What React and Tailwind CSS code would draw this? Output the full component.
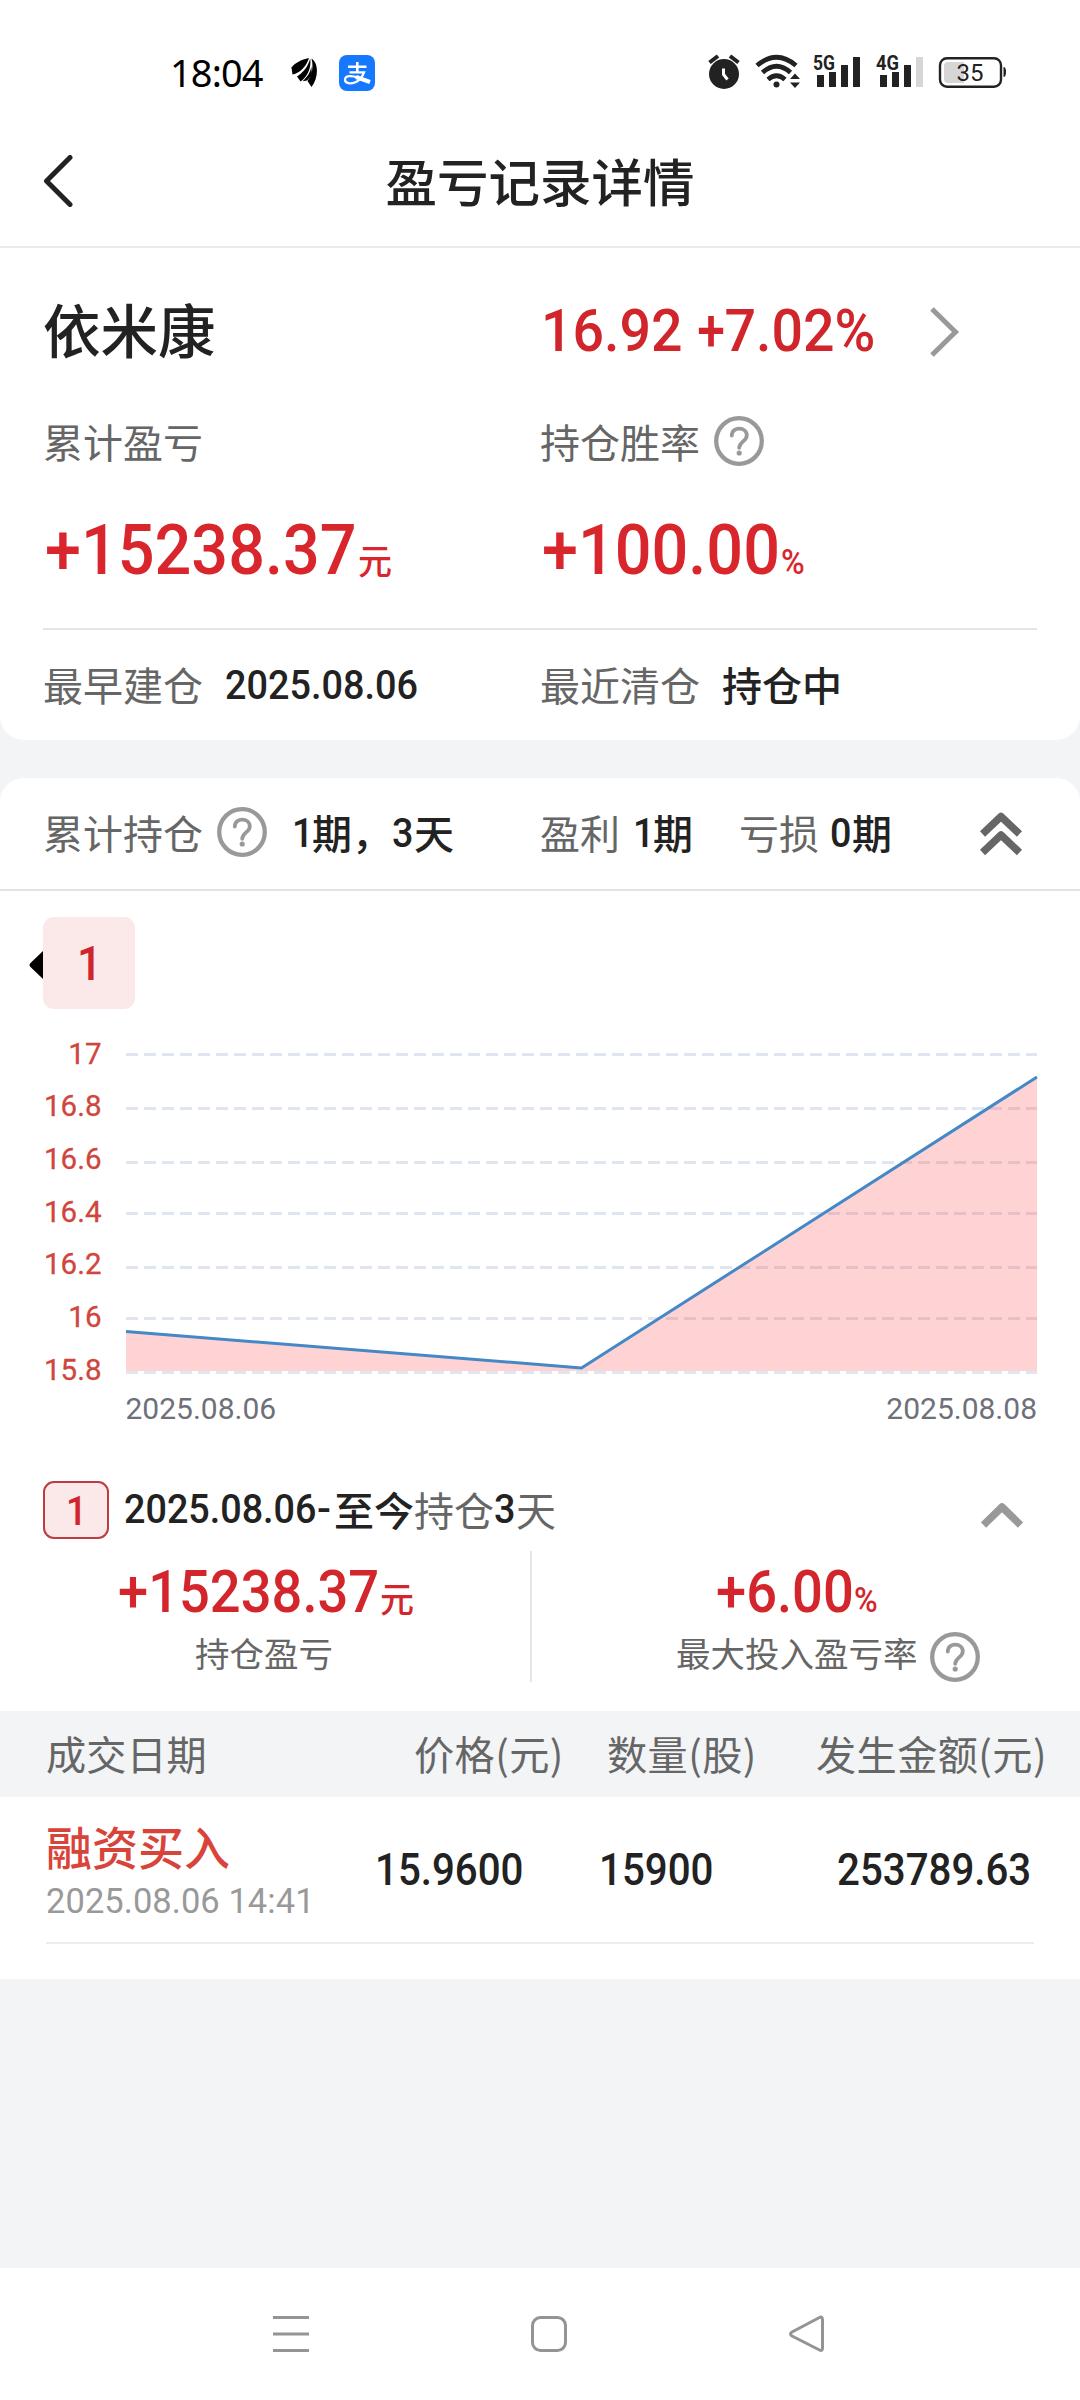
const gridLines = [
  { label: "17", y: 11 },
  { label: "16.8", y: 65 },
  { label: "16.6", y: 119 },
  { label: "16.4", y: 170 },
  { label: "16.2", y: 224 },
  { label: "16", y: 275 },
  { label: "15.8", y: 329 },
];

const Help = ({ className = "" }) => (
  <svg viewBox="0 0 50 50" className={`size-[50px] shrink-0 ${className}`} fill="none" stroke="#999">
    <circle cx="25" cy="25" r="22.800" strokeWidth="4.300" />
    <path d="M17.8 19.5c0-9.2 15-9 15 0 0 5.600-7.600 6.200-7.600 12.300" strokeWidth="3.800" strokeLinecap="round" />
    <circle cx="25.200" cy="37" r="2.600" fill="#999" stroke="none" />
  </svg>
);

// narrow figures, squeezed to the given box
const Num = ({ children, box, text }) => (
  <span className={`inline-block shrink-0 whitespace-nowrap font-[Roboto] font-medium ${box}`}>
    <span className={`inline-block origin-left ${text}`}>{children}</span>
  </span>
);

const StatusBar = () => (
  <div className="flex h-[120px] items-start pt-[53px] text-[#222]">
    <span className="-mt-px ml-[170px] w-[121px] font-['Noto_Sans'] text-[38px] leading-[40px] tracking-[-0.9px] text-black">18:04</span>
    <svg viewBox="0 0 27 30" className="mt-[5px] h-[30px] w-[27px]" fill="#000">
      <path d="M18 0C10 1.500 4 5 0.500 9.500L1.500 16.500C9 15 15 9 18 0z" />
      <path d="M19.200 0.500C17 9 12 14.500 6 18.500L9.500 23.500C17 18.500 20.500 9 19.200 0.500z" />
      <path d="M20.500 0.500C27.500 5 28 19 20.500 29L16.500 23C21.500 16.500 22.500 8 20.500 0.500z" />
      <path d="M11.500 23.200C17 18.500 20 13 20.300 8L21 17L16 22.500z" />
    </svg>
    <svg viewBox="0 0 36 36" className="mt-[2px] ml-[21px] size-9 overflow-visible" fill="none" stroke="#fff">
      <rect width="36" height="36" rx="8" fill="#1677ff" stroke="none" />
      <path d="M9 11.800h18.500M18.300 7v10.500" strokeWidth="2.600" />
      <path d="M10.500 17.300h14.500q-2.500 6.500-7.500 9.500c-5.500 3-11.500 1.500-11.500-2 0-4 6.500-4.800 12.500-2.300" strokeWidth="2.300" />
      <path d="M17 22l14 5" strokeWidth="4" />
    </svg>
    <svg viewBox="0 0 310 36" className="mt-[1px] ml-[332px] h-9 w-[310px] overflow-visible" fill="#222">
      <circle cx="17" cy="20" r="15" />
      <path d="M2.500 8.500l8.500-6.500M31.500 8.500l-8.500-6.500" stroke="#222" strokeWidth="4" />
      <path d="M16.500 14.500v6l4 5" stroke="#fff" strokeWidth="3" fill="none" />
      <g fill="none" stroke="#222" strokeWidth="4.800">
        <path d="M50 11.500q19.500-16.500 39 0" />
        <path d="M55.500 18.500q14-12.500 28 0" />
        <path d="M61 25.500q8.500-7.500 17 0" />
      </g>
      <circle cx="69.500" cy="30.500" r="3" />
      <path d="M88 19.500l5 5.500H83zM88 34l5-5.500H83z" />
      <text x="106" y="16" fontSize="21" fontWeight="700" fontFamily="Roboto" textLength="22" lengthAdjust="spacingAndGlyphs">5G</text>
      <path d="M110 21h7v12h-7zM122 18h7v15h-7zM134 11h7v22h-7zM146 3h7v30h-7z" />
      <text x="169" y="16" fontSize="21" fontWeight="700" fontFamily="Roboto" textLength="23" lengthAdjust="spacingAndGlyphs">4G</text>
      <path d="M173 21h7v12h-7zM185 18h7v15h-7zM197 11h7v22h-7z" />
      <path d="M209 3h7v30h-7z" fill="#d6d6d6" />
      <rect x="233" y="4.200" width="61" height="28.500" rx="7" fill="none" stroke="#222" strokeWidth="2.400" />
      <path d="M241 8h16v21h-16q-4 0-4-4V12q0-4 4-4z" fill="#d6d6d6" />
      <path d="M296.500 13q2.500 0 2.500 5t-2.500 5z" />
      <text x="249.500" y="27" fontSize="24" fontFamily="Roboto">35</text>
    </svg>
  </div>
);

const Chart = () => (
  <div className="mt-[34px] flex h-[399px]">
    <svg viewBox="0 0 1080 399" className="h-[399px] w-[1080px] overflow-visible" fontFamily="Roboto">
      {gridLines.map((line, i) => (
        <g key={line.label}>
          <text x="101.500" y={20.5 + i * 52.7} fontSize="29.500" fill="#d0453c" stroke="#d0453c" strokeWidth="0.300" textAnchor="end">
            {line.label}
          </text>
          <path d={`M126 ${line.y + 0.5}H1037`} stroke="#e0e6f1" strokeWidth="3" strokeDasharray="12 6" />
        </g>
      ))}
      <path d="M126 288.500L581.500 325 1037 34V328H126z" fill="rgba(255,35,35,0.2)" />
      <path d="M126 288.500L581.500 325 1037 34" fill="none" stroke="#4488c8" strokeWidth="3" strokeLinejoin="bevel" />
      <text x="125.500" y="376" fontSize="30" fill="#6e7079">2025.08.06</text>
      <text x="1037" y="376" fontSize="30" fill="#6e7079" textAnchor="end">2025.08.08</text>
    </svg>
  </div>
);

export default function App() {
  return (
    <div className="flex h-[2400px] w-[1080px] flex-col overflow-hidden bg-[#f2f4f6] font-['Noto_Sans_CJK_SC',sans-serif] text-[40px] leading-[40px] text-[#666]">
      <div className="h-[740px] rounded-b-[24px] bg-white">
        <StatusBar />
        <div className="grid h-[128px] grid-cols-[1fr_auto_1fr] items-center border-b-2 border-[#ebebeb] pb-[4px]">
          <svg viewBox="0 0 30 52" className="ml-[43px] h-[52px] w-[30px]" fill="none" stroke="#222" strokeWidth="5">
            <path d="M27 2.500L3.500 26l23.500 23.500" strokeLinecap="round" strokeLinejoin="round" />
          </svg>
          <h1 className="mb-[3px] text-[51.500px] leading-[60px] font-medium text-[#222]">盈亏记录详情</h1>
        </div>

        <div className="flex h-[167px] items-center">
          <h2 className="mb-[7px] w-[543px] pl-[43px] text-[57.500px] leading-[60px] font-medium text-[#222]">依米康</h2>
          <Num box="w-[387px] -mt-px text-[#d0252b]" text="scale-x-[0.940] text-[59px] leading-[60px] -ml-[2px]">
            16.92<span className="ml-[12px] inline-block origin-right scale-x-90">+</span>7.02%
          </Num>
          <svg viewBox="0 0 30 52" className="h-[52px] w-[30px]" fill="none" stroke="#999" strokeWidth="5">
            <path d="M2 3l23.500 23L2 49" />
          </svg>
        </div>

        <div className="mx-[43px] h-[215px] border-b-2 border-[#e4e5e6]">
          <div className="grid grid-cols-2 pt-[1px]">
            <div className="flex h-[50px] items-center">累计盈亏</div>
            <div className="flex h-[50px] items-center">
              持仓胜率
              <Help className="ml-[14px]" />
            </div>
          </div>
          <div className="mt-[50px] grid grid-cols-2 text-[#d8262c]">
            <div className="flex items-baseline">
              <Num box="w-[315px] pl-[2px]" text="scale-x-[0.925] text-[70px] leading-[68px]">+15238.37</Num>
              <span className="text-[34px] font-medium">元</span>
            </div>
            <div className="flex items-baseline">
              <Num box="w-[241px] pl-[2px]" text="scale-x-[0.925] text-[70px] leading-[68px]">+100.00</Num>
              <Num box="" text="scale-x-[0.920] text-[35px]">%</Num>
            </div>
          </div>
        </div>
        <div className="mx-[43px] grid h-[108px] grid-cols-2 items-center">
          <div className="flex items-center">
            <span className="w-[182px]">最早建仓</span>
            <Num box="text-[#222] pt-[2px]" text="scale-x-[0.922] text-[41px]">2025.08.06</Num>
          </div>
          <div className="flex items-center">
            <span className="w-[182px]">最近清仓</span>
            <span className="font-medium text-[#222]">持仓中</span>
          </div>
        </div>
      </div>

      <div className="mt-[38px] h-[1201px] rounded-t-[24px] bg-white">
        <div className="flex h-[113px] items-center border-b-2 border-[#e1e2e3] pb-[3px] pl-[43px]">
          <span>累计持仓</span>
          <Help className="mr-[25px] ml-[14px]" />
          <span className="flex w-[248px] items-center font-medium text-[#222]">
            <Num box="w-[20px] pt-[2px]" text="scale-x-[0.920] text-[41px]">1</Num>期，
            <Num box="w-[22px] pt-[2px]" text="scale-x-[0.920] text-[41px]">3</Num>天
          </span>
          <span className="w-[93px]">盈利</span>
          <span className="flex w-[106px] items-center font-medium text-[#222]">
            <Num box="w-[20px] pt-[2px]" text="scale-x-[0.920] text-[41px]">1</Num>期
          </span>
          <span className="w-[91px]">亏损</span>
          <span className="flex w-[150px] items-center font-medium text-[#222]">
            <Num box="w-[22px] pt-[2px]" text="scale-x-[0.920] text-[41px]">0</Num>期
          </span>
          <svg viewBox="0 0 42 44" className="mt-[4px] h-11 w-[42px]" fill="none" stroke="#666" strokeWidth="7.500">
            <path d="M2.500 22L21 4.500l18.500 17.500M2.500 40.500L21 23l18.500 17.500" strokeLinejoin="round" />
          </svg>
        </div>

        <div className="mt-[26px] flex items-center">
          <svg viewBox="0 0 14 28" className="ml-[29px] mt-1 h-7 w-3.5">
            <path d="M14 0v28L1.500 16q-2-2 0-4z" />
          </svg>
          <div className="flex h-[92px] w-[92px] items-center justify-center rounded-[11px] bg-[#fbe8e9]">
            <Num box="text-[#cf252b] pt-[4px] pl-[4px]" text="scale-x-[0.900] text-[49px]">1</Num>
          </div>
        </div>

        <Chart />

        <div className="mt-[38px] flex h-[60px] items-center pl-[43px]">
          <div className="flex h-[58px] w-[66px] items-center justify-center rounded-[11px] border-2 border-[#bd3b42] bg-[#fbe8e9]">
            <Num box="text-[#cf252b] pt-[3px] pl-[3px]" text="scale-x-[0.900] text-[41px]">1</Num>
          </div>
          <div className="mb-[3px] ml-[15px] flex w-[857px] items-center text-[#222]">
            <Num box="w-[193px] pt-[2px]" text="scale-x-[0.920] text-[41px]">2025.08.06</Num>
            <Num box="w-[17px] pt-[2px]" text="text-[41px]">-</Num>
            <span className="font-medium">至今</span>
            <span>
              <span className="text-[#666]">持仓</span>
            </span>
            <Num box="w-[22px] pt-[2px]" text="scale-x-[0.920] text-[41px]">3</Num>
            <span className="text-[#666]">天</span>
          </div>
          <svg viewBox="0 0 42 26" className="mt-[9px] h-[26px] w-[42px]" fill="none" stroke="#999" strokeWidth="7.500">
            <path d="M2.500 23L21 5l18.500 18" strokeLinejoin="round" />
          </svg>
        </div>

        <div className="mt-[11px] flex h-[131px] text-[34.500px]">
          <div className="w-[532px] border-r-2 border-[#e6e6e6]">
            <div className="flex items-baseline pt-[11px] pl-[118px] text-[#d2262c]">
              <Num box="w-[262px]" text="scale-x-[0.920] text-[59px] leading-[60px]">+15238.37</Num>
              <span className="text-[34px] font-medium">元</span>
            </div>
            <div className="mt-[10px] pl-[195px]">持仓盈亏</div>
          </div>
          <div>
            <div className="flex items-baseline pt-[11px] pl-[184px] text-[#d2262c]">
              <Num box="w-[138px]" text="scale-x-[0.920] text-[59px] leading-[60px]">+6.00</Num>
              <Num box="" text="scale-x-[0.920] text-[35px]">%</Num>
            </div>
            <div className="mt-[10px] flex h-10 items-center pl-[144px]">
              最大投入盈亏率
              <Help className="mt-[9px] ml-[12px]" />
            </div>
          </div>
        </div>

        <div className="mt-[29px] flex h-[86px] items-center bg-[#f2f4f6] pb-[3px] pl-[46px] text-[40.200px]">
          <span className="w-[368px]">成交日期</span>
          <span className="w-[193px] tracking-[0.400px]">价格(元)</span>
          <span className="w-[209px] tracking-[0.400px]">数量(股)</span>
          <span className="tracking-[0.400px]">发生金额(元)</span>
        </div>
        <div className="mx-[46px] flex h-[147px] border-b-2 border-[#ededed]">
          <div className="w-[329px] shrink-0 pt-[25px]">
            <div className="text-[46px] leading-[46px] font-[450] text-[#d9443a]">融资买入</div>
            <div className="mt-[13px] font-[Roboto] text-[34.500px] leading-[40px] tracking-[0.050px] text-[#999]">2025.08.06 14:41</div>
          </div>
          <div className="flex items-center pt-[3px] text-[#222]">
            <Num box="w-[224px]" text="scale-x-[0.915] text-[44px]">15.9600</Num>
            <Num box="w-[238px]" text="scale-x-[0.915] text-[44px]">15900</Num>
            <Num box="" text="scale-x-[0.915] text-[44px]">253789.63</Num>
          </div>
        </div>
      </div>

      <div className="mt-auto h-[132px] bg-white">
        <svg viewBox="0 0 1080 132" className="h-[132px] w-[1080px]" fill="none" stroke="#949494" strokeWidth="3">
          <path d="M273 49.500h36M273 66h36M273 82.500h36" />
          <rect x="532.500" y="49.500" width="33" height="33" rx="8" />
          <path d="M822.500 52v28q0 3.500-3 2L792 68q-3-2 0-4l27.500-14.500q3-1.500 3 2.500z" />
        </svg>
      </div>
    </div>
  );
}
